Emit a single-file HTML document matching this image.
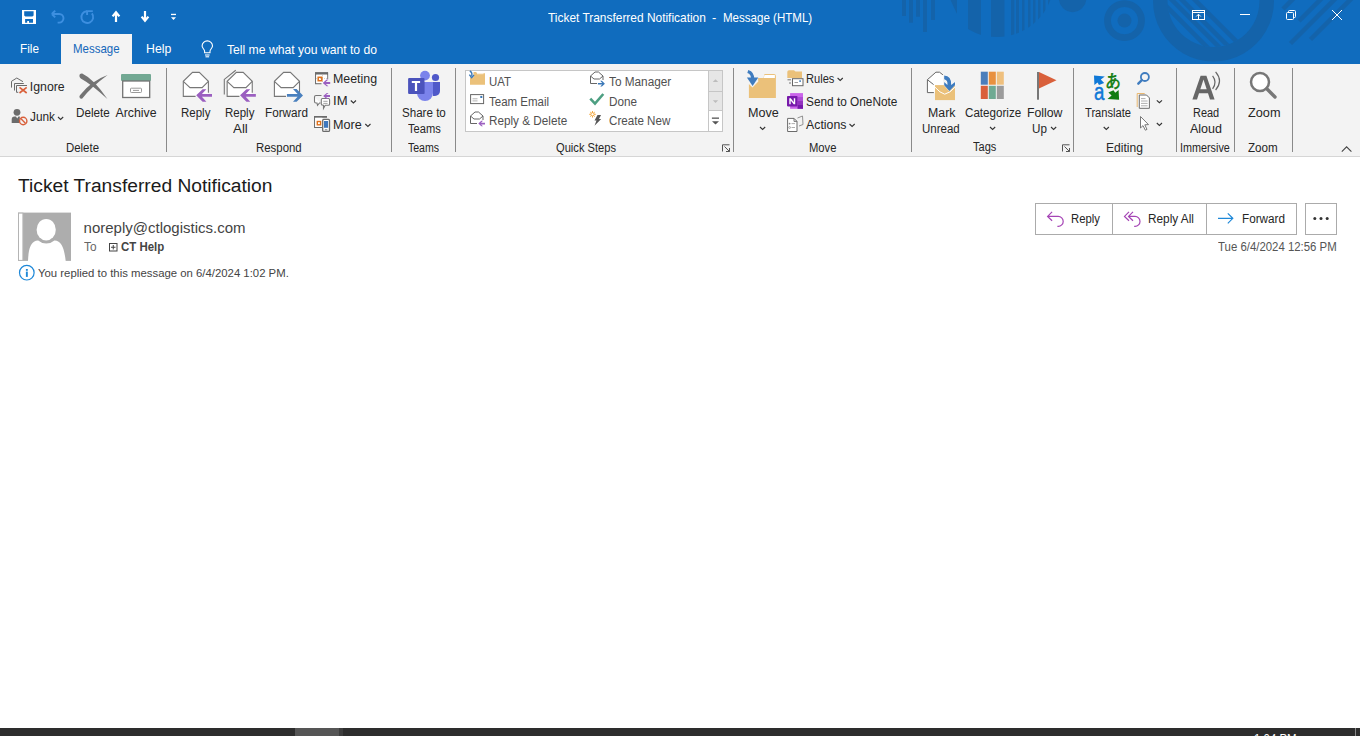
<!DOCTYPE html>
<html><head><meta charset="utf-8"><style>
html,body{margin:0;padding:0;}
body{width:1360px;height:736px;overflow:hidden;position:relative;background:#fff;font-family:"Liberation Sans",sans-serif;}
.t{position:absolute;white-space:pre;transform-origin:0 0;-webkit-font-smoothing:antialiased;}
.a{position:absolute;}
svg{position:absolute;overflow:visible;}
</style></head><body>
<div class="a" style="left:0;top:0;width:1360px;height:64px;background:#106CBE"></div>
<div class="a" style="left:61px;top:34px;width:71px;height:30px;background:#F3F3F3"></div>
<div class="a" style="left:0;top:64px;width:1360px;height:92px;background:#F3F3F3"></div>
<div class="a" style="left:0;top:156px;width:1360px;height:1px;background:#D6D6D6"></div>
<div class="a" style="left:0;top:728px;width:1360px;height:8px;background:#2D2D2D"></div>
<div class="a" style="left:295px;top:728px;width:44px;height:8px;background:#555"></div>
<div class="a" style="left:339px;top:728px;width:4px;height:8px;background:#3d3d3d"></div>
<div class="a" style="left:1355px;top:728px;width:1px;height:8px;background:#888"></div>
<svg width="1360" height="736" style="left:0;top:0" viewBox="0 0 1360 736">
<defs><clipPath id="tb"><rect x="0" y="0" width="1360" height="64"/></clipPath></defs>
<!-- title bar decoration -->
<g fill="#1463AA" clip-path="url(#tb)">
  <rect x="902" y="-2" width="4" height="18"/>
  <rect x="909" y="-2" width="4" height="24.7"/>
  <rect x="916" y="-2" width="4" height="18.7"/>
  <rect x="923" y="-2" width="4" height="34"/>
  <rect x="931" y="-2" width="4" height="22"/>
  <path d="M949.6 -2 L957 -2 L957 14 Z"/>
  <g clip-path="url(#semi)"></g>
</g>
<defs><clipPath id="semi"><circle cx="997" cy="-20" r="57"/></clipPath>
<clipPath id="ring"><circle cx="1213.5" cy="1" r="46"/></clipPath></defs>
<g fill="#1463AA" clip-path="url(#semi)">
  <rect x="968" y="-40" width="13" height="80"/>
  <rect x="991" y="-40" width="13.5" height="80"/>
  <rect x="1011" y="-40" width="3.3" height="80"/>
  <rect x="1016" y="-40" width="3" height="80"/>
  <rect x="1022" y="-40" width="2.5" height="80"/>
  <rect x="1028" y="-40" width="2.5" height="80"/>
  <rect x="1033" y="-40" width="2.5" height="80"/>
  <rect x="1038" y="-40" width="2.5" height="80"/>
  <rect x="1043" y="-40" width="2.5" height="80"/>
  <rect x="1048" y="-40" width="2.5" height="80"/>
</g>
<g fill="#1463AA">
  <circle cx="1072.6" cy="-1.6" r="13.75"/>
  <path fill-rule="evenodd" d="M1124.5 0.2 a20.4 20.4 0 1 0 0.01 0 Z M1124.5 7 a13.6 13.6 0 1 1 -0.01 0 Z"/>
  <circle cx="1124.5" cy="20.6" r="7"/>
  <path fill-rule="evenodd" d="M1213.5 -59.5 a60.5 60.5 0 1 0 0.01 0 Z M1213.5 -45 a46 46 0 1 1 -0.01 0 Z"/>
</g>
<g stroke="#1463AA" stroke-width="4.5" clip-path="url(#ring)">
  <line x1="1160" y1="0" x2="1210" y2="50"/>
  <line x1="1167" y1="-5" x2="1222" y2="50"/>
  <line x1="1177" y1="-5" x2="1232" y2="50"/>
  <line x1="1190" y1="-5" x2="1245" y2="50"/>
</g>
<g stroke="#1463AA" stroke-width="4.5">
  <line x1="1296" y1="-4" x2="1283" y2="9"/>
  <line x1="1324" y1="-4" x2="1299" y2="21"/>
  <line x1="1338" y1="-4" x2="1290.5" y2="43.5"/>
  <line x1="1354" y1="-4" x2="1310.5" y2="39.5"/>
</g>
<!-- window controls -->
<g stroke="#fff" stroke-width="1" fill="none">
  <rect x="1192.5" y="10.5" width="12" height="9"/>
  <line x1="1192.5" y1="12.5" x2="1204.5" y2="12.5"/>
  <path d="M1198.5 19.5 V14.5 M1196.2 16.5 L1198.5 14.2 L1200.8 16.5"/>
  <line x1="1240" y1="14.5" x2="1250" y2="14.5"/>
  <rect x="1286.5" y="12.5" width="7" height="7" rx="1"/>
  <path d="M1288.5 12.5 V11.5 Q1288.5 10.5 1289.5 10.5 H1294.5 Q1295.5 10.5 1295.5 11.5 V16.5 Q1295.5 17.5 1294.5 17.5 H1293.5"/>
  <path d="M1332 10 L1342 20 M1342 10 L1332 20"/>
</g>
<!-- RIBBON --><!-- QAT -->
<g fill="#fff">
  <path fill-rule="evenodd" d="M22 10 H36 V24 H22 Z M24.2 11.2 V15.4 L25.4 16.6 H32.4 L33.6 15.4 V11.2 Z M25.1 19 V22.8 H27.2 V21 H29 V22.8 H33 V19 Z"/>
</g>
<g stroke="#3D8FE0" stroke-width="1.9" fill="none">
  <path d="M51.8 14 L55.2 10.6 M51.8 14 L55.2 17.4 M51.8 14 H59.2 A4.3 4.3 0 0 1 59.2 22.6 H57.6"/>
  <path d="M91.9 13.4 A5.9 5.9 0 1 1 86.9 11.2"/>
  <path d="M87.1 15 V11.1 H92.8"/>
</g>
<g stroke="#fff" stroke-width="2" fill="none">
  <path d="M116 22 V12 M112.6 16.4 L116 12.2 L119.4 16.4" stroke-width="2.2"/>
  <path d="M145 11 V21 M141.6 16.6 L145 20.8 L148.4 16.6" stroke-width="2.2"/>
</g>
<rect x="171" y="13.8" width="5" height="1.3" fill="#fff"/>
<path d="M171 17.2 H176 L173.5 20 Z" fill="#fff"/>
<!-- lightbulb -->
<g stroke="#fff" stroke-width="1.1" fill="none">
  <path d="M204.6 52.8 V51.2 C204.6 49.4 202.1 48 202.1 46.1 A5.2 5.2 0 0 1 212.5 46.1 C212.5 48 210 49.4 210 51.2 V52.8 Z"/>
  <line x1="205" y1="55" x2="209.6" y2="55"/>
  <line x1="205.5" y1="56.8" x2="209.1" y2="56.8"/>
</g>

<!-- separators -->
<g fill="#8A8A8A">
  <rect x="166" y="68" width="1" height="84"/>
  <rect x="391" y="68" width="1" height="84"/>
  <rect x="455" y="68" width="1" height="84"/>
  <rect x="733" y="68" width="1" height="84"/>
  <rect x="911" y="68" width="1" height="84"/>
  <rect x="1073" y="68" width="1" height="84"/>
  <rect x="1176" y="68" width="1" height="84"/>
  <rect x="1234" y="68" width="1" height="84"/>
  <rect x="1292" y="68" width="1" height="84"/>
</g>

<!-- Ignore -->
<g stroke="#6b6b6b" stroke-width="1" fill="none">
  <path d="M11.5 87.6 V81.3 L16.8 78 L23 81.7"/>
  <path d="M14.5 90.5 V83.5 H23.8"/>
  <path d="M18.3 92.3 H16.5 V85.5 H27"/>
</g>
<path d="M19.5 87.3 L26.7 93 M26.7 87.3 L19.5 93" stroke="#D9603B" stroke-width="1.6"/>
<!-- Junk -->
<circle cx="17" cy="112.3" r="3.4" fill="#6b6b6b"/>
<path d="M11.7 123 V119.5 Q11.7 116.6 14.5 116.6 H16 L17.2 118.6 L18.4 116.6 H19.8 V123 Z" fill="#6b6b6b"/>
<circle cx="23.2" cy="121" r="3.7" fill="#F3F3F3" stroke="#D9603B" stroke-width="1.4"/>
<line x1="20.8" y1="118.6" x2="25.6" y2="123.4" stroke="#D9603B" stroke-width="1.4"/>
<!-- chevrons -->
<g stroke="#333" stroke-width="1.1" fill="none">
  <path d="M58 117 L60.6 119.4 L63.2 117"/>
  <path d="M350.8 100.5 L353.4 102.9 L356 100.5"/>
  <path d="M365.3 124 L367.9 126.4 L370.5 124"/>
  <path d="M760 127 L762.6 129.4 L765.2 127"/>
  <path d="M837.6 78 L840.2 80.4 L842.8 78"/>
  <path d="M849.5 124 L852.1 126.4 L854.7 124"/>
  <path d="M990 127 L992.6 129.4 L995.2 127"/>
  <path d="M1051 127 L1053.6 129.4 L1056.2 127"/>
  <path d="M1103.7 127 L1106.3 129.4 L1108.9 127"/>
  <path d="M1156.8 100.3 L1159.4 102.7 L1162 100.3"/>
  <path d="M1156.8 123 L1159.4 125.4 L1162 123"/>
</g>
<!-- Delete X -->
<g fill="#737373">
  <path d="M79.5 76.5 Q79 73.2 82.2 73.4 Q94 79 107.4 99 Q92 84.6 80.8 78.4 Q79.7 77.6 79.5 76.5 Z"/>
  <path d="M79.4 96.8 Q79.6 99.3 82.3 98.6 Q90 88 107.6 75 Q92 80.5 80.6 94.4 Q79.3 95.6 79.4 96.8 Z"/>
</g>
<!-- Archive -->
<rect x="121" y="74" width="30" height="7" rx="1" fill="#72A893"/>
<rect x="122.7" y="81" width="27" height="16.5" fill="#fff" stroke="#737373" stroke-width="1.3"/>
<rect x="130.5" y="88.2" width="11" height="4.3" rx="0.8" fill="#fff" stroke="#9a9a9a" stroke-width="1"/>
<line x1="133" y1="90.4" x2="139" y2="90.4" stroke="#9a9a9a" stroke-width="1"/>

<!-- Reply (ribbon) -->
<g>
  <path d="M183.3 96.4 V81.3 L192.5 72.4 H199.3 L208.4 81.3 V96.4 Z" fill="#fff"/>
  <g stroke="#777" stroke-width="1.1" fill="none">
    <path d="M195.6 96.4 H183.3 V81.3 L192.5 72.4 H199.3 L208.4 81.3 V92.7"/>
    <path d="M183.3 81.3 L190 87.6 H202.1 L208.4 81.3"/>
  </g>
</g>
<path d="M196.2 95.3 L202.6 89.2 H206.4 L201.9 94 H212 V96.7 H201.9 L206.4 101.8 H202.6 Z" fill="#9B5FC0"/>
<!-- Reply All -->
<g transform="translate(43.85 0)">
  <path d="M183.3 96.4 V81.3 L192.5 72.4 H199.3 L208.4 81.3 V96.4 Z" fill="#fff"/>
  <g stroke="#777" stroke-width="1.1" fill="none">
    <path d="M195.6 96.4 H183.3 V81.3 L192.5 72.4 H199.3 L208.4 81.3 V92.7"/>
    <path d="M183.3 81.3 L190 87.6 H202.1 L208.4 81.3"/>
  </g>
</g>
<path d="M240.05 95.3 L246.45 89.2 H250.25 L245.75 94 H255.85 V96.7 H245.75 L250.25 101.8 H246.45 Z" fill="#9B5FC0"/>
<path d="M224.3 94.6 V79.4 L235.75 70.2" stroke="#777" stroke-width="1.1" fill="none"/>
<!-- Forward -->
<g transform="translate(91.1 0)">
  <path d="M183.3 96.4 V81.3 L192.5 72.4 H199.3 L208.4 81.3 V96.4 Z" fill="#fff"/>
  <g stroke="#777" stroke-width="1.1" fill="none">
    <path d="M195.6 96.4 H183.3 V81.3 L192.5 72.4 H199.3 L208.4 81.3 V92.7"/>
    <path d="M183.3 81.3 L190 87.6 H202.1 L208.4 81.3"/>
  </g>
</g>
<path d="M303 95.4 L296.6 89.1 H293 L297.6 94.1 H287 V96.8 H297.6 L293 101.7 H296.6 Z" fill="#4A80BE"/>
<rect x="286" y="94" width="1" height="3" fill="#F3F3F3"/>

<!-- Meeting -->
<rect x="315.1" y="72.1" width="12.9" height="2.6" fill="#6b6b6b"/>
<path d="M315.6 72.5 V83.6 H321.5 M327.6 72.5 V79" stroke="#6b6b6b" stroke-width="1.1" fill="none"/>
<rect x="316.2" y="74.7" width="11" height="8.5" fill="#fff"/>
<g stroke="#c8c8c8" stroke-width="0.8" stroke-dasharray="1 1"><line x1="316" y1="78.5" x2="327" y2="78.5"/><line x1="322.5" y1="75" x2="322.5" y2="83"/></g>
<rect x="318.2" y="77.3" width="3.6" height="3.4" fill="none" stroke="#E0711A" stroke-width="1.5"/>
<path d="M322.8 82.9 L326.6 79.6 H328.4 L325.8 82 H330.2 V83.9 H325.8 L328.4 86.2 H326.6 Z" fill="#9B5FC0"/>
<!-- IM -->
<g stroke="#777" stroke-width="1.1" fill="#fff">
  <path d="M316 95.5 H321.5 M314.5 97 V101.5 Q314.5 103 316 103 H317 L317.5 105.3 L319.5 103 H320.5"/>
  <path d="M322.5 98.5 H328.3 Q329.6 98.5 329.6 99.8 V104 Q329.6 105.3 328.3 105.3 H325.2 L323.5 108.3 V105.3 Q321.3 105.3 321.3 104 V99.8 Q321.3 98.5 322.5 98.5 Z"/>
</g>
<path d="M314.5 97 Q314.5 95.5 316 95.5" stroke="#777" stroke-width="1.1" fill="none"/>
<g stroke="#999" stroke-width="0.9"><line x1="323.3" y1="101.3" x2="327.6" y2="101.3"/><line x1="323.3" y1="103.4" x2="327.6" y2="103.4"/></g>
<path d="M323.1 95.9 L326.8 92.9 H328.6 L326 95 H330 V96.9 H326 L328.6 98.9 H326.8 Z" fill="#9B5FC0"/>
<!-- More -->
<rect x="314" y="116" width="13" height="1.8" fill="#6b6b6b"/>
<path d="M314.6 116.5 V127.5 H322" stroke="#6b6b6b" stroke-width="1.1" fill="none"/>
<rect x="315.2" y="117.8" width="7" height="9.2" fill="#fff"/>
<rect x="317.3" y="121.5" width="3.3" height="3.3" fill="none" stroke="#E0711A" stroke-width="1.4"/>
<rect x="322.7" y="119.4" width="6.8" height="12" rx="1" fill="#fff" stroke="#6b6b6b" stroke-width="1.3"/>
<rect x="324" y="121" width="4.1" height="6.8" fill="#3F78BE"/>
<line x1="324.8" y1="129.8" x2="327.4" y2="129.8" stroke="#6b6b6b" stroke-width="0.9"/>

<!-- Teams -->
<circle cx="425" cy="75.6" r="4.9" fill="#7B83EB"/>
<circle cx="435.5" cy="77.5" r="3.6" fill="#5059C9"/>
<path d="M433 82 H440 V91 A5 5 0 0 1 435 96 H433 Z" fill="#5059C9"/>
<path d="M417 82 H433 V93 A7.9 7.9 0 0 1 417 93 Z" fill="#7B83EB"/>
<path d="M417 93.9 H424.5 V82 H419 V93.9 Z" fill="#5a5fbf" opacity="0.5"/>
<rect x="408.1" y="78.1" width="16.4" height="15.8" rx="1" fill="#4B53BC"/>
<path d="M411.8 81 H420.1 V83 H417.1 V91 H414.9 V83 H411.8 Z" fill="#fff"/>

<!-- Quick steps box -->
<rect x="465.5" y="70.5" width="257" height="61" fill="#fff" stroke="#C6C6C6" stroke-width="1"/>
<rect x="708.5" y="70.5" width="14" height="21" fill="#E6E6E6" stroke="#C6C6C6" stroke-width="1"/>
<rect x="708.5" y="91.5" width="14" height="19" fill="#E6E6E6" stroke="#C6C6C6" stroke-width="1"/>
<rect x="708.5" y="110.5" width="14" height="21" fill="#fff" stroke="#C6C6C6" stroke-width="1"/>
<path d="M712.8 82 L715.5 79.3 L718.2 82 Z" fill="#BDBDBD"/>
<path d="M712.8 100.2 L715.5 103 L718.2 100.2 Z" fill="#BDBDBD"/>
<rect x="711.9" y="117.5" width="7.1" height="1.3" fill="#555"/>
<path d="M712 121.2 H719 L715.5 124.4 Z" fill="#555"/>
<!-- UAT icon -->
<path d="M473.5 72 H476 L477.2 73.2 H485 V84.7 H470 V77.3 L473.5 77.3 Z" fill="#EBC17A"/>
<rect x="477" y="73.2" width="6.5" height="1" fill="#fff" opacity="0.8"/>
<path d="M469.8 71 Q472.6 72.2 471.7 76" stroke="#3B78B8" stroke-width="1.4" fill="none"/>
<path d="M469.4 74.6 L471.6 77.6 L474 75" stroke="#3B78B8" stroke-width="1.4" fill="none"/>
<!-- Team email -->
<rect x="470.6" y="94.6" width="13" height="9" fill="#fff" stroke="#666" stroke-width="1"/>
<rect x="480.3" y="96" width="2" height="2" fill="#3B78B8"/>
<g stroke="#aaa" stroke-width="0.9"><line x1="472.5" y1="98.8" x2="477.5" y2="98.8"/><line x1="472.5" y1="100.9" x2="477.5" y2="100.9"/></g>
<!-- reply & delete icon -->
<g stroke="#666" stroke-width="1" fill="none">
  <path d="M477 123.5 H470.5 V116 L475 112 H478.5 L483 116 V120"/>
  <path d="M470.5 116 L474 119 H479.5 L483 116"/>
</g>
<path d="M478.3 123.6 L481.3 120.8 H483 L481 122.8 H485 V124.4 H481 L483 126.3 H481.3 Z" fill="#9B5FC0"/>
<!-- to manager icon -->
<g stroke="#666" stroke-width="1" fill="none">
  <path d="M597 83.5 H590.5 V76 L595 72 H598.5 L603 76 V80"/>
  <path d="M590.5 76 L594 79 H599.5 L603 76"/>
</g>
<path d="M604.9 83.7 L601.9 80.8 H600.2 L602.2 82.9 H597.9 V84.5 H602.2 L600.2 86.6 H601.9 Z" fill="#3B78B8"/>
<!-- done -->
<path d="M590.3 98.6 L595 103.6 L603.3 94" stroke="#4D9F82" stroke-width="2.6" fill="none"/>
<!-- create new -->
<g stroke="#F0A030" stroke-width="0.9">
  <line x1="592.5" y1="111" x2="592.5" y2="117.6"/><line x1="589.2" y1="114.3" x2="595.8" y2="114.3"/>
  <line x1="590.2" y1="112" x2="594.8" y2="116.6"/><line x1="594.8" y1="112" x2="590.2" y2="116.6"/>
</g>
<circle cx="592.5" cy="114.3" r="1.6" fill="#fff" stroke="#F0A030" stroke-width="0.8"/>
<path d="M597.5 115 H601 L599 119 H601.2 L594.5 125.8 L596.5 120.5 H594.5 Z" fill="#555"/>
<!-- dialog launchers -->
<g stroke="#555" stroke-width="1" fill="none">
  <path d="M722.5 151.5 V144.8 H729.5 M724.5 146.5 L729.5 151.5 M726 151.5 H729.5 V148"/>
  <path d="M1062.5 151.5 V144.8 H1069.5 M1064.5 146.5 L1069.5 151.5 M1066 151.5 H1069.5 V148"/>
</g>

<!-- Move folder -->
<path d="M758 77.9 H763.5 L764.5 74.1 H774 Q775.9 74.1 775.9 76 V97.9 H748.9 V84 L752.5 87.5 L758.3 81.5 Z" fill="#EBC17A"/>
<path d="M764.5 75 H774.9 V78 H763.7 Z" fill="#fff"/>
<path d="M747.8 71.5 Q753 73 752.8 80" stroke="#3F7CBF" stroke-width="3.3" fill="none"/>
<path d="M746.9 77.4 H758.3 L752.6 86 Z" fill="#3F7CBF"/>
<!-- Rules -->
<path d="M787.3 72 Q787.3 70.3 789 70.3 H794 L795.5 71.5 H802 V78 H787.3 Z" fill="#EBC17A"/>
<rect x="792.5" y="78.7" width="10.5" height="7" fill="#fff" stroke="#666" stroke-width="1"/>
<rect x="799.3" y="80.3" width="1.6" height="1.6" fill="#3B78B8"/>
<line x1="794.5" y1="82.5" x2="798" y2="82.5" stroke="#888" stroke-width="0.8"/>
<g stroke="#777" stroke-width="1"><line x1="787.5" y1="79.8" x2="791" y2="79.8"/><line x1="789" y1="83" x2="791" y2="83"/></g>
<!-- OneNote -->
<rect x="790.1" y="93.1" width="12.9" height="15.7" fill="#CA64EA"/>
<rect x="797.5" y="97" width="5.5" height="4" fill="#AE4BD5"/>
<rect x="797.5" y="101" width="5.5" height="4" fill="#9332BF"/>
<rect x="797.5" y="105" width="5.5" height="3.8" fill="#7719AA"/>
<rect x="787" y="96" width="10.5" height="10.4" rx="0.8" fill="#7719AA"/>
<path d="M789.3 104.3 V98.2 H790.8 L793.8 102.2 V98.2 H795.2 V104.3 H793.7 L790.7 100.4 V104.3 Z" fill="#fff"/>
<!-- Actions -->
<path d="M797.5 118 L802.5 116 L803 124.5 L799 126" stroke="#888" stroke-width="0.9" fill="none"/>
<path d="M787.6 118.4 H794 L797 121.4 V131.5 H787.6 Z" fill="#fff" stroke="#6b6b6b" stroke-width="1"/>
<path d="M794 118.4 V121.4 H797" stroke="#6b6b6b" stroke-width="0.9" fill="none"/>
<circle cx="789.6" cy="123.6" r="0.9" fill="#888"/><circle cx="789.6" cy="127.5" r="0.9" fill="none" stroke="#888" stroke-width="0.7"/>
<g stroke="#999" stroke-width="0.8"><line x1="791.5" y1="123.6" x2="795" y2="123.6"/><line x1="791.5" y1="127.5" x2="795" y2="127.5"/></g>

<!-- Mark Unread -->
<path d="M927.4 92.6 V79.7 L935.9 72.2 H939.5 L943 74.8 V85 H935 V92.6 Z" fill="#fff"/>
<g stroke="#666" stroke-width="1" fill="none">
  <path d="M933.9 92.6 H927.4 V79.7 L935.9 72.2 H939.5 L942.9 74.8"/>
  <path d="M927.4 79.7 L933.6 84.6"/>
</g>
<rect x="935" y="85.1" width="20" height="15" fill="#EBC17A"/>
<path d="M935 87.2 Q940 93 944.7 94.2 Q950 93 955 87.2" stroke="#fff" stroke-width="1" fill="none"/>
<path d="M944.2 82 L947.4 85 Q948 80 944.2 79.2 V75.6 Q951.5 76 951.2 85 L955 82 V85.2 L949.4 91 L944.2 85.2 Z" fill="#3F7CBF" stroke="#fff" stroke-width="0.8" paint-order="stroke"/>
<!-- Categorize -->
<rect x="980.8" y="71.7" width="7" height="13" fill="#4A7EBB"/>
<rect x="988.8" y="71.7" width="7" height="13" fill="#E8913F"/>
<rect x="996.8" y="71.7" width="7" height="13" fill="#EFC07E"/>
<rect x="980.8" y="85.8" width="7" height="13.2" fill="#D9603B"/>
<rect x="988.8" y="85.8" width="7" height="13.2" fill="#6FAA93"/>
<rect x="996.8" y="85.8" width="7" height="13.2" fill="#9B9B9B"/>
<!-- Flag -->
<rect x="1037" y="72" width="2" height="27.7" fill="#777"/>
<path d="M1039 72 L1056.5 80.2 L1039 88.5 Z" fill="#D9603B"/>

<!-- Translate -->
<path d="M1094 75.6 L1104.8 76.4 L1100.8 79.6 L1104.2 83 L1099 85 L1097.6 82.6 L1094.4 85 Z" fill="#0F78D7"/>
<text x="1094" y="99.8" font-family="Liberation Sans" font-size="23.5" textLength="10.4" lengthAdjust="spacingAndGlyphs" fill="#0F78D7" stroke="#0F78D7" stroke-width="0.5">a</text>
<text x="1105.6" y="86.4" font-size="16.5" textLength="14.6" lengthAdjust="spacingAndGlyphs" fill="#107C10" stroke="#107C10" stroke-width="0.7">あ</text>
<path d="M1119.1 99.8 L1107.5 99 L1111.6 95.6 L1108.4 92.5 L1113.5 90.3 L1115.2 92.8 L1118.6 90 Z" fill="#107C10"/>
<!-- Find -->
<circle cx="1144.9" cy="77" r="4" fill="none" stroke="#3F7CBF" stroke-width="1.8"/>
<line x1="1138.3" y1="83.7" x2="1141.8" y2="80.2" stroke="#3F7CBF" stroke-width="2.4" stroke-linecap="round"/>
<!-- Replace -->
<path d="M1137.2 107 V93.5 H1144.7" stroke="#E8B060" stroke-width="0.9" fill="none"/>
<path d="M1139.3 95 H1146.5 L1149.4 97.9 V108.3 H1139.3 Z" fill="#fff" stroke="#6b6b6b" stroke-width="1"/>
<g stroke="#999" stroke-width="0.8"><line x1="1141" y1="98.6" x2="1145.5" y2="98.6"/><line x1="1141" y1="101" x2="1147.6" y2="101"/><line x1="1141" y1="103.4" x2="1147.6" y2="103.4"/><line x1="1141" y1="105.8" x2="1147.6" y2="105.8"/></g>
<!-- Select -->
<path d="M1140.5 116.5 V128 L1143 125.6 L1145.3 130.2 L1147 129.4 L1144.8 124.8 L1148.5 124.6 Z" fill="#fff" stroke="#6b6b6b" stroke-width="0.9" stroke-linejoin="round"/>
<!-- Read Aloud -->
<path d="M1192.4 99.5 L1200.6 75.7 H1206.4 L1214.6 99.5 H1210 L1208 93.3 H1199 L1197 99.5 Z M1200.3 89.2 H1206.7 L1203.5 79.6 Z" fill="#666" fill-rule="evenodd"/>
<g stroke="#666" stroke-width="1.2" fill="none">
  <path d="M1212.6 75.8 Q1217.5 82.2 1212.6 88.8"/>
  <path d="M1215.6 71.9 Q1223.4 81 1215.6 90"/>
</g>
<!-- Zoom -->
<circle cx="1260" cy="82" r="9" fill="#fff" stroke="#777" stroke-width="2.5"/>
<line x1="1266.8" y1="88.8" x2="1275" y2="97" stroke="#777" stroke-width="3.4" stroke-linecap="round"/>
<!-- collapse caret -->
<path d="M1341.8 151.7 L1346.6 146.9 L1351.4 151.7" stroke="#444" stroke-width="1.1" fill="none"/>

<!-- Header: avatar -->
<rect x="18" y="212.6" width="53" height="48.3" fill="#ADADAD"/>
<rect x="18.5" y="213.1" width="4.4" height="47.3" fill="#fff" stroke="#b4b4b4" stroke-width="1"/>
<ellipse cx="46.2" cy="229.7" rx="9.6" ry="10.8" fill="#fff"/>
<path d="M28 260.9 C28.4 252 29.6 244.5 34 241.8 Q36 240.3 38.2 240.4 Q42 243.6 46.3 243.6 Q50.6 243.6 54.4 240.4 Q56.6 240.3 58.6 241.8 C63 244.5 64.6 252 65.7 260.9 Z" fill="#fff"/>
<!-- info icon -->
<circle cx="26.8" cy="272.7" r="7.3" fill="none" stroke="#1E88D8" stroke-width="1.2"/>
<rect x="25.9" y="269" width="1.9" height="1.8" fill="#1E88D8"/>
<rect x="25.9" y="271.6" width="1.9" height="5.3" fill="#1E88D8"/>
<!-- expand box -->
<rect x="109.5" y="243.5" width="7.5" height="7.5" fill="none" stroke="#444" stroke-width="1"/>
<path d="M111 247.25 H115.5 M113.25 245 V249.5" stroke="#444" stroke-width="1"/>
<!-- header buttons -->
<rect x="1035.5" y="203.5" width="261" height="31" fill="none" stroke="#ABABAB" stroke-width="1"/>
<line x1="1112.5" y1="203.5" x2="1112.5" y2="234.5" stroke="#ABABAB" stroke-width="1"/>
<line x1="1206.5" y1="203.5" x2="1206.5" y2="234.5" stroke="#ABABAB" stroke-width="1"/>
<rect x="1305.5" y="203.5" width="31" height="31" fill="none" stroke="#ABABAB" stroke-width="1"/>
<g fill="#333"><circle cx="1314.8" cy="218.6" r="1.5"/><circle cx="1321" cy="218.6" r="1.5"/><circle cx="1327.2" cy="218.6" r="1.5"/></g>
<g stroke="#A544B5" stroke-width="1.2" fill="none">
  <path d="M1052.1 211.8 L1047.6 216.4 L1052.1 220.8 M1047.6 216.4 H1058.2 A5 5 0 0 1 1058.2 226.4 H1057.4"/>
  <path d="M1129 211.8 L1124.5 216.4 L1129 220.8 M1133 211.8 L1128.5 216.4 L1133 220.8 M1128.5 216.4 H1135 A5 5 0 0 1 1135 226.4 H1134.2"/>
</g>
<path d="M1218 218.3 H1232.5 M1227.8 213.3 L1232.8 218.3 L1227.8 223.3" stroke="#1E88D8" stroke-width="1.2" fill="none"/>
<!-- /RIBBON --></svg>

<div class="t" style="left:548.10px;top:11.61px;font-size:12.80px;line-height:12.80px;color:#fff;transform:scaleX(0.9312);">Ticket Transferred Notification</div>
<div class="t" style="left:711.80px;top:11.61px;font-size:12.80px;line-height:12.80px;color:#fff;transform:scaleX(1.0088);">-</div>
<div class="t" style="left:722.70px;top:11.61px;font-size:12.80px;line-height:12.80px;color:#fff;transform:scaleX(0.9023);">Message (HTML)</div>
<div class="t" style="left:19.80px;top:41.95px;font-size:13.00px;line-height:13.00px;color:#fff;transform:scaleX(0.9023);">File</div>
<div class="t" style="left:73.00px;top:42.75px;font-size:12.40px;line-height:12.40px;color:#1467BA;transform:scaleX(0.9262);">Message</div>
<div class="t" style="left:145.80px;top:41.95px;font-size:13.00px;line-height:13.00px;color:#fff;transform:scaleX(0.9463);">Help</div>
<div class="t" style="left:227.30px;top:42.65px;font-size:13.00px;line-height:13.00px;color:#fff;transform:scaleX(0.9351);">Tell me what you want to do</div>
<div class="t" style="left:29.80px;top:81.14px;font-size:12.30px;line-height:12.30px;color:#262626;">Ignore</div>
<div class="t" style="left:29.50px;top:111.44px;font-size:12.30px;line-height:12.30px;color:#262626;transform:scaleX(0.9622);">Junk</div>
<div class="t" style="left:75.80px;top:106.84px;font-size:12.30px;line-height:12.30px;color:#262626;transform:scaleX(0.9478);">Delete</div>
<div class="t" style="left:115.50px;top:106.84px;font-size:12.30px;line-height:12.30px;color:#262626;">Archive</div>
<div class="t" style="left:66.00px;top:142.04px;font-size:12.30px;line-height:12.30px;color:#262626;transform:scaleX(0.9281);">Delete</div>
<div class="t" style="left:180.90px;top:107.34px;font-size:12.30px;line-height:12.30px;color:#262626;transform:scaleX(0.9349);">Reply</div>
<div class="t" style="left:224.90px;top:107.34px;font-size:12.30px;line-height:12.30px;color:#262626;transform:scaleX(0.9349);">Reply</div>
<div class="t" style="left:232.50px;top:122.54px;font-size:12.30px;line-height:12.30px;color:#262626;transform:scaleX(1.0827);">All</div>
<div class="t" style="left:265.10px;top:107.34px;font-size:12.30px;line-height:12.30px;color:#262626;transform:scaleX(0.9532);">Forward</div>
<div class="t" style="left:332.80px;top:73.04px;font-size:12.30px;line-height:12.30px;color:#262626;transform:scaleX(1.0078);">Meeting</div>
<div class="t" style="left:332.80px;top:95.44px;font-size:12.30px;line-height:12.30px;color:#262626;transform:scaleX(1.0612);">IM</div>
<div class="t" style="left:332.80px;top:119.04px;font-size:12.30px;line-height:12.30px;color:#262626;transform:scaleX(1.0241);">More</div>
<div class="t" style="left:255.80px;top:142.04px;font-size:12.30px;line-height:12.30px;color:#262626;transform:scaleX(0.9282);">Respond</div>
<div class="t" style="left:401.50px;top:106.94px;font-size:12.30px;line-height:12.30px;color:#262626;transform:scaleX(0.9420);">Share to</div>
<div class="t" style="left:407.80px;top:122.54px;font-size:12.30px;line-height:12.30px;color:#262626;transform:scaleX(0.9026);">Teams</div>
<div class="t" style="left:407.80px;top:141.54px;font-size:12.30px;line-height:12.30px;color:#262626;transform:scaleX(0.8600);letter-spacing:-0.045px;">Teams</div>
<div class="t" style="left:488.90px;top:75.64px;font-size:12.30px;line-height:12.30px;color:#505050;transform:scaleX(0.9288);">UAT</div>
<div class="t" style="left:488.90px;top:95.84px;font-size:12.30px;line-height:12.30px;color:#505050;transform:scaleX(0.9354);">Team Email</div>
<div class="t" style="left:488.90px;top:115.44px;font-size:12.30px;line-height:12.30px;color:#505050;transform:scaleX(0.9532);">Reply &amp; Delete</div>
<div class="t" style="left:609.20px;top:75.64px;font-size:12.30px;line-height:12.30px;color:#505050;transform:scaleX(0.9591);">To Manager</div>
<div class="t" style="left:609.20px;top:95.84px;font-size:12.30px;line-height:12.30px;color:#505050;transform:scaleX(0.9522);">Done</div>
<div class="t" style="left:609.20px;top:115.44px;font-size:12.30px;line-height:12.30px;color:#505050;transform:scaleX(0.9439);">Create New</div>
<div class="t" style="left:555.90px;top:141.54px;font-size:12.30px;line-height:12.30px;color:#262626;transform:scaleX(0.9048);">Quick Steps</div>
<div class="t" style="left:747.90px;top:107.04px;font-size:12.30px;line-height:12.30px;color:#262626;transform:scaleX(1.0240);">Move</div>
<div class="t" style="left:806.10px;top:72.94px;font-size:12.30px;line-height:12.30px;color:#262626;transform:scaleX(0.9031);">Rules</div>
<div class="t" style="left:806.10px;top:95.94px;font-size:12.30px;line-height:12.30px;color:#262626;transform:scaleX(0.9616);">Send to OneNote</div>
<div class="t" style="left:806.10px;top:119.04px;font-size:12.30px;line-height:12.30px;color:#262626;">Actions</div>
<div class="t" style="left:808.50px;top:141.74px;font-size:12.30px;line-height:12.30px;color:#262626;transform:scaleX(0.9143);">Move</div>
<div class="t" style="left:928.10px;top:106.74px;font-size:12.30px;line-height:12.30px;color:#262626;">Mark</div>
<div class="t" style="left:922.10px;top:122.84px;font-size:12.30px;line-height:12.30px;color:#262626;transform:scaleX(0.9345);">Unread</div>
<div class="t" style="left:965.10px;top:106.74px;font-size:12.30px;line-height:12.30px;color:#262626;transform:scaleX(0.9448);">Categorize</div>
<div class="t" style="left:1026.90px;top:106.74px;font-size:12.30px;line-height:12.30px;color:#262626;">Follow</div>
<div class="t" style="left:1032.20px;top:122.84px;font-size:12.30px;line-height:12.30px;color:#262626;transform:scaleX(0.9476);">Up</div>
<div class="t" style="left:972.90px;top:141.34px;font-size:12.30px;line-height:12.30px;color:#262626;transform:scaleX(0.8968);">Tags</div>
<div class="t" style="left:1084.50px;top:106.84px;font-size:12.30px;line-height:12.30px;color:#262626;transform:scaleX(0.9052);">Translate</div>
<div class="t" style="left:1106.00px;top:141.74px;font-size:12.30px;line-height:12.30px;color:#262626;transform:scaleX(0.9812);">Editing</div>
<div class="t" style="left:1192.80px;top:106.84px;font-size:12.30px;line-height:12.30px;color:#262626;transform:scaleX(0.8910);">Read</div>
<div class="t" style="left:1189.80px;top:122.54px;font-size:12.30px;line-height:12.30px;color:#262626;transform:scaleX(1.0172);">Aloud</div>
<div class="t" style="left:1180.10px;top:141.74px;font-size:12.30px;line-height:12.30px;color:#262626;transform:scaleX(0.8780);">Immersive</div>
<div class="t" style="left:1247.50px;top:106.84px;font-size:12.30px;line-height:12.30px;color:#262626;transform:scaleX(1.0337);">Zoom</div>
<div class="t" style="left:1248.40px;top:141.64px;font-size:12.30px;line-height:12.30px;color:#262626;transform:scaleX(0.9446);">Zoom</div>
<div class="t" style="left:18.10px;top:177.75px;font-size:17.60px;line-height:17.60px;color:#1b1b1b;transform:scaleX(1.0919);">Ticket Transferred Notification</div>
<div class="t" style="left:83.60px;top:220.15px;font-size:15.00px;line-height:15.00px;color:#444;">noreply@ctlogistics.com</div>
<div class="t" style="left:84.00px;top:240.99px;font-size:12.00px;line-height:12.00px;color:#666;transform:scaleX(0.9863);">To</div>
<div class="t" style="left:120.70px;top:240.99px;font-size:12.00px;line-height:12.00px;color:#444;transform:scaleX(0.9529);font-weight:700;">CT Help</div>
<div class="t" style="left:37.70px;top:268.14px;font-size:11.00px;line-height:11.00px;color:#444;transform:scaleX(1.0322);">You replied to this message on 6/4/2024 1:02 PM.</div>
<div class="t" style="left:1071.00px;top:213.04px;font-size:12.30px;line-height:12.30px;color:#262626;transform:scaleX(0.9190);">Reply</div>
<div class="t" style="left:1147.60px;top:213.04px;font-size:12.30px;line-height:12.30px;color:#262626;transform:scaleX(0.9612);">Reply All</div>
<div class="t" style="left:1241.90px;top:212.74px;font-size:12.30px;line-height:12.30px;color:#262626;transform:scaleX(0.9532);">Forward</div>
<div class="t" style="left:1218.30px;top:240.69px;font-size:12.00px;line-height:12.00px;color:#555;transform:scaleX(0.9498);">Tue 6/4/2024 12:56 PM</div>
<div class="t" style="left:1253.90px;top:732.89px;font-size:12.00px;line-height:12.00px;color:#fff;transform:scaleX(0.9532);">1:04 PM</div>
</body></html>
